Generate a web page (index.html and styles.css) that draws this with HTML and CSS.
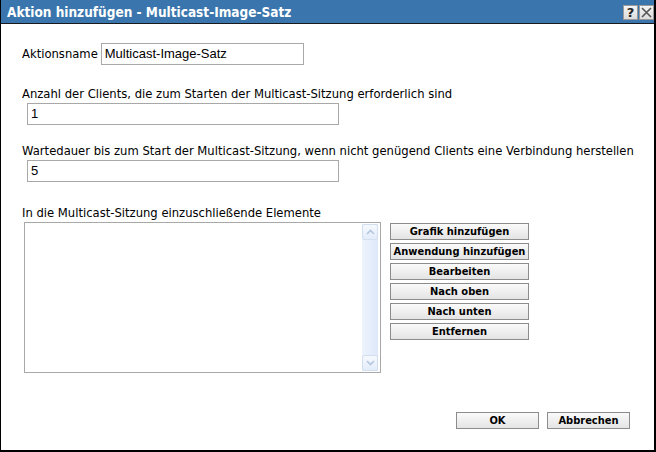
FILE: index.html
```html
<!DOCTYPE html>
<html lang="de">
<head>
<meta charset="utf-8">
<title>Aktion hinzufügen</title>
<link rel="stylesheet" href="styles.css">
</head>
<body>
<div class="dialog">
  <div class="titlebar">
    <span class="title">Aktion hinzufügen - Multicast-Image-Satz</span>
    <div class="tb-buttons">
      <span class="tb-btn">?</span>
      <span class="tb-btn close">
        <svg width="11" height="11" viewBox="0 0 11 11"><path d="M1 1 L10 10 M10 1 L1 10" stroke="#555" stroke-width="1.6" fill="none"/></svg>
      </span>
    </div>
  </div>
  <div class="content">
    <div class="row-name">
      <label class="lbl">Aktionsname</label>
      <div class="input name-input">Multicast-Image-Satz</div>
    </div>
    <div class="field f1">
      <div class="lbl">Anzahl der Clients, die zum Starten der Multicast-Sitzung erforderlich sind</div>
      <div class="input wide">1</div>
    </div>
    <div class="field f2">
      <div class="lbl">Wartedauer bis zum Start der Multicast-Sitzung, wenn nicht genügend Clients eine Verbindung herstellen</div>
      <div class="input wide">5</div>
    </div>
    <div class="field f3">
      <div class="lbl">In die Multicast-Sitzung einzuschließende Elemente</div>
      <div class="list-row">
        <div class="listbox">
          <div class="scrollbar">
            <div class="sb-btn">
              <svg width="9" height="6" viewBox="0 0 9 6"><path d="M1 5 L4.5 1.5 L8 5" stroke="#b4c6e0" stroke-width="1.6" fill="none"/></svg>
            </div>
            <div class="sb-track"></div>
            <div class="sb-btn">
              <svg width="9" height="6" viewBox="0 0 9 6"><path d="M1 1 L4.5 4.5 L8 1" stroke="#b4c6e0" stroke-width="1.6" fill="none"/></svg>
            </div>
          </div>
        </div>
        <div class="side-buttons">
          <button class="btn">Grafik hinzufügen</button>
          <button class="btn">Anwendung hinzufügen</button>
          <button class="btn">Bearbeiten</button>
          <button class="btn">Nach oben</button>
          <button class="btn">Nach unten</button>
          <button class="btn">Entfernen</button>
        </div>
      </div>
    </div>
    <div class="footer">
      <button class="btn ok">OK</button>
      <button class="btn cancel">Abbrechen</button>
    </div>
  </div>
</div>
</body>
</html>
```
FILE: styles.css
```css
html, body {
  margin: 0;
  padding: 0;
  background: #ffffff;
}
.dialog {
  width: 656px;
  height: 452px;
  box-sizing: border-box;
  border-left: 1px solid #000;
  border-right: 2px solid #000;
  border-bottom: 2px solid #000;
  display: flex;
  flex-direction: column;
  background: #fff;
}
.titlebar {
  height: 23px;
  flex: none;
  background: #3a76ad;
  border-bottom: 1px solid #1a1a1a;
  display: flex;
  align-items: center;
  justify-content: space-between;
  padding-left: 6px;
}
.title {
  color: #fff;
  font-family: "DejaVu Sans Condensed", "DejaVu Sans", sans-serif;
  font-weight: bold;
  font-size: 13.5px;
}
.tb-buttons {
  display: flex;
  gap: 1px;
  align-self: flex-start;
  margin-top: 5px;
}
.tb-btn {
  width: 15px;
  height: 15px;
  background: linear-gradient(#f4f4f4, #dcdcdc);
  border: 1px solid #9a9a9a;
  box-sizing: border-box;
  display: flex;
  align-items: center;
  justify-content: center;
  font-family: "DejaVu Sans", sans-serif;
  font-weight: bold;
  font-size: 13px;
  color: #222;
  line-height: 1;
}
.content {
  flex: 1;
  display: flex;
  flex-direction: column;
  padding: 19px 0 0 20px;
  font-family: "DejaVu Sans", sans-serif;
  font-size: 11.6px;
  color: #000;
}
.lbl {
  font-family: "DejaVu Sans", sans-serif;
  font-size: 11.6px;
  line-height: 14px;
  white-space: nowrap;
}
.row-name {
  display: flex;
  align-items: center;
  gap: 3px;
  padding-left: 1px;
}
.input {
  box-sizing: border-box;
  height: 22px;
  border: 1px solid #a8a8a8;
  background: #fff;
  font-family: "Liberation Sans", Arial, sans-serif;
  font-size: 13px;
  padding: 2px 3px;
  line-height: 16px;
}
.name-input {
  width: 203px;
}
.wide {
  width: 312px;
  margin-left: 5px;
  margin-top: 2px;
}
.f1 { margin-top: 22px; padding-left: 1px; }
.f2 { margin-top: 19px; padding-left: 1px; }
.f3 { margin-top: 24px; padding-left: 1px; }
.list-row {
  display: flex;
  align-items: flex-start;
  gap: 9px;
  margin-top: 2px;
  margin-left: 2px;
}
.listbox {
  width: 357px;
  height: 151px;
  box-sizing: border-box;
  border: 1px solid #a8a8a8;
  display: flex;
  justify-content: flex-end;
  padding: 1px 2px 1px 1px;
}
.scrollbar {
  width: 16px;
  display: flex;
  flex-direction: column;
  background: linear-gradient(to right, #eef4fd, #dde8fa);
}
.sb-btn {
  height: 16px;
  box-sizing: border-box;
  border: 1px solid #d3dfef;
  border-radius: 2px;
  background: linear-gradient(#f6f9fe, #e3ecfa);
  display: flex;
  align-items: center;
  justify-content: center;
}
.sb-track { flex: 1; }
.side-buttons {
  display: flex;
  flex-direction: column;
  gap: 3px;
  margin-top: 1px;
}
.btn {
  width: 139px;
  height: 17px;
  box-sizing: border-box;
  border: 1px solid #8c8c8c;
  background: linear-gradient(#fafafa, #e4e4e4);
  font-family: "DejaVu Sans Condensed", "DejaVu Sans", sans-serif;
  font-weight: bold;
  font-size: 11px;
  color: #000;
  padding: 0;
  line-height: 15px;
  margin: 0;
}
.footer {
  display: flex;
  justify-content: flex-end;
  gap: 8px;
  margin-top: auto;
  margin-bottom: 21px;
  margin-right: 24px;
}
.footer .btn {
  width: 83px;
  height: 17px;
}
```
